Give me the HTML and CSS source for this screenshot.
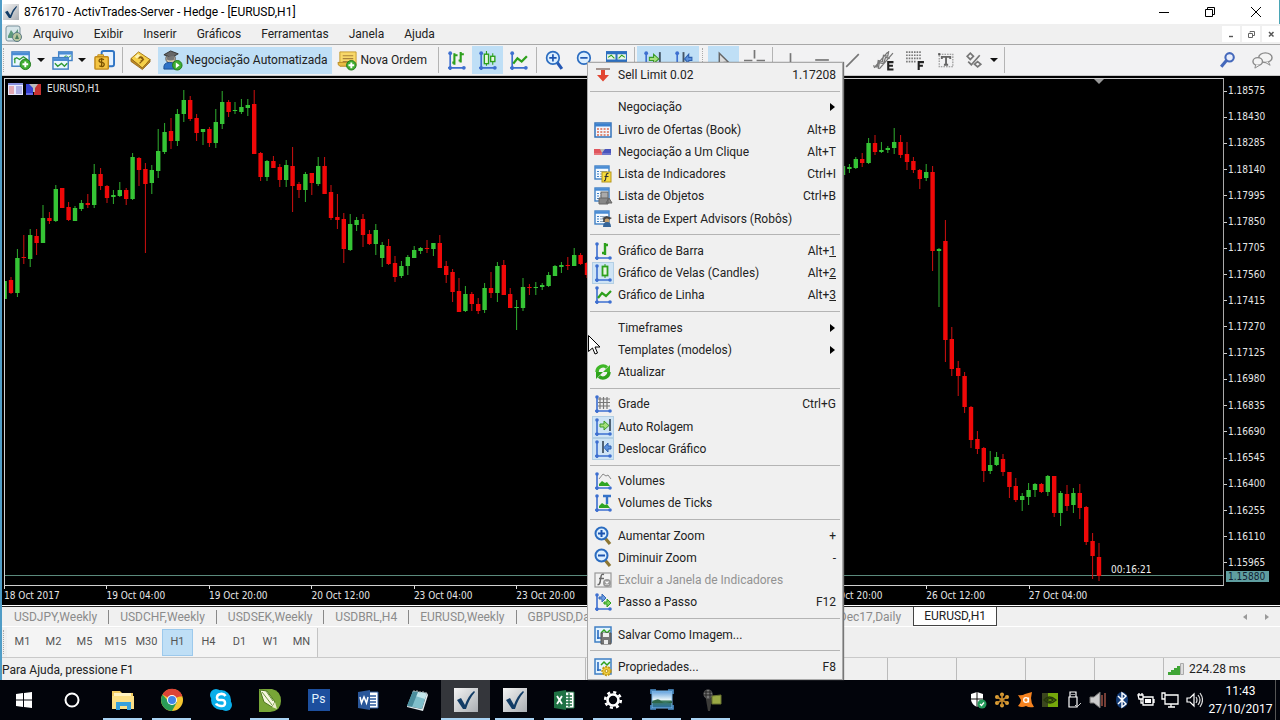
FILE: index.html
```html
<!DOCTYPE html>
<html lang="pt-BR">
<head>
<meta charset="utf-8">
<title>876170 - ActivTrades-Server - Hedge - [EURUSD,H1]</title>
<link rel="stylesheet" href="styles.css">
</head>
<body>
<svg class="defs" aria-hidden="true">
  <defs>
    <linearGradient id="silver" x1="0" y1="0" x2="1" y2="1"><stop offset="0" stop-color="#f4f4f4"/><stop offset="1" stop-color="#a9adb2"/></linearGradient>
    <linearGradient id="sky" x1="0" y1="0" x2="0" y2="1"><stop offset="0" stop-color="#5f9fdc"/><stop offset=".5" stop-color="#e4f1f7"/><stop offset=".6" stop-color="#3c7c5c"/><stop offset="1" stop-color="#2c6ea8"/></linearGradient>
    <symbol id="check" viewBox="0 0 24 24"><rect width="24" height="24" fill="url(#silver)"/><path d="M3 12l4-2 4 7q3-9 9-14l1 1q-6 7-9 17h-3z" fill="#123c66"/></symbol>
    <symbol id="axes" viewBox="0 0 20 20"><path d="M4 2v15h14M2 17h2v2" fill="none" stroke="#3d6fd0" stroke-width="1.6"/><circle cx="4" cy="3" r="1.8" fill="#3d6fd0"/><circle cx="4" cy="17" r="1.8" fill="#3d6fd0"/><circle cx="17" cy="17" r="1.8" fill="#3d6fd0"/></symbol>
    <symbol id="bars" viewBox="0 0 20 20"><use href="#axes"/><path d="M8 3v11M6 12h2M8 5h3M14 2v10M12 10h2M14 4h3" stroke="#2da01c" stroke-width="2"/></symbol>
    <symbol id="bar" viewBox="0 0 20 20"><use href="#axes"/><path d="M12 2v12M9 12h3M12 4h3" stroke="#2da01c" stroke-width="2.4"/></symbol>
    <symbol id="candles" viewBox="0 0 20 20"><use href="#axes"/><path d="M9 1v14M15 3v11" stroke="#2da01c"/><rect x="7" y="4" width="4" height="9" fill="#e8f8e0" stroke="#2da01c" stroke-width="1.3"/><rect x="13" y="6" width="4" height="5" fill="#e8f8e0" stroke="#2da01c" stroke-width="1.3"/></symbol>
    <symbol id="candle" viewBox="0 0 20 20"><use href="#axes"/><path d="M12 1v14" stroke="#2da01c"/><rect x="9.500" y="3.500" width="5" height="9" fill="#e8f8e0" stroke="#2da01c" stroke-width="1.8"/></symbol>
    <symbol id="line" viewBox="0 0 20 20"><use href="#axes"/><path d="M5 13l4-5 4 3 5-5" fill="none" stroke="#2da01c" stroke-width="2.2"/></symbol>
    <symbol id="scroll" viewBox="0 0 20 20"><use href="#axes"/><path d="M17 2v12" stroke="#456" stroke-width="1.8"/><path d="M7 7h4V4l5 4.500-5 4.500v-3H7z" fill="#a5df7b" stroke="#3a9b28"/></symbol>
    <symbol id="shift" viewBox="0 0 20 20"><use href="#axes"/><path d="M10 2v12" stroke="#456" stroke-width="1.8"/><path d="M18 7h-3V4l-4 4.500 4 4.500v-3h3z" fill="#5c91dc" stroke="#2c5fae"/></symbol>
    <symbol id="zoomin" viewBox="0 0 20 20"><path d="M12 12l5 6" stroke="#8d7632" stroke-width="3.200"/><circle cx="8.500" cy="7.500" r="6" fill="#dcefff" stroke="#2b6cc0" stroke-width="2"/><path d="M8.500 4v7M5 7.500h7" stroke="#1c54b0" stroke-width="2"/></symbol>
    <symbol id="zoomout" viewBox="0 0 20 20"><path d="M12 12l5 6" stroke="#8d7632" stroke-width="3.200"/><circle cx="8.500" cy="7.500" r="6" fill="#dcefff" stroke="#2b6cc0" stroke-width="2"/><path d="M5 7.500h7" stroke="#1c54b0" stroke-width="2"/></symbol>
    <symbol id="list" viewBox="0 0 20 20"><rect x="2" y="2" width="14" height="13" fill="#f4faff" stroke="#3f7fc4" stroke-width="1.400"/><path d="M2 3.500h14" stroke="#4a8cd4" stroke-width="2.500"/><path d="M4 7.500h2M4 10h2M4 12.500h2" stroke="#3f7fc4"/><path d="M7 7.500h7M7 10h7M7 12.500h7" stroke="#8ea7bd"/></symbol>
    <symbol id="frame" viewBox="0 0 20 20"><rect x="2" y="2" width="16" height="15" fill="#e4f4ff" stroke="#3f7fc4" stroke-width="1.500"/><path d="M5 5v9M4 13h4" stroke="#2b6cc0" stroke-width="1.600"/><path d="M8 8l3-3 3 3 3-3" fill="none" stroke="#2da01c" stroke-width="1.500"/></symbol>
  </defs>
</svg>

<div class="screen">
  <main class="window">
    <header class="title">
      <svg class="title-icon" viewBox="0 0 24 24"><use href="#check"/></svg>
      <h1>876170 - ActivTrades-Server - Hedge - [EURUSD,H1]</h1>
      <div class="caption">
        <button aria-label="Minimizar"><svg viewBox="0 0 12 12"><path d="M1 6.500h10" stroke="#000"/></svg></button>
        <button aria-label="Restaurar"><svg viewBox="0 0 12 12"><path d="M1.500 3.500h7v7h-7zM3.500 3V1.500h7v7H9" fill="none" stroke="#000"/></svg></button>
        <button aria-label="Fechar"><svg viewBox="0 0 12 12"><path d="M1 1l10 10M11 1L1 11" stroke="#000"/></svg></button>
      </div>
    </header>

    <nav class="menubar">
      <svg class="app-icon" viewBox="0 0 18 18"><rect x="1" y="1" width="14" height="15" rx="2" fill="#d8e6ea" stroke="#7b929d"/><path d="M3 11l3-6 3 4 4-5v9H3z" fill="#5d9a7c"/><circle cx="12" cy="12" r="4.500" fill="#b9c7a0" stroke="#5c7a86"/><path d="M10 14l2-5 2 5z" fill="#4c7e5e"/></svg>
      <button>Arquivo</button><button>Exibir</button><button>Inserir</button><button>Gráficos</button><button>Ferramentas</button><button>Janela</button><button>Ajuda</button>
      <div class="mdi">
        <button aria-label="Minimizar gráfico"><svg viewBox="0 0 8 8"><path d="M2 6.500h4" stroke="#555" stroke-width="1.400"/></svg></button>
        <button aria-label="Restaurar gráfico"><svg viewBox="0 0 8 8"><path d="M1.500 3.500h4v4h-4zM3 2.500v-1h4.500v4H6" fill="none" stroke="#666"/></svg></button>
        <button aria-label="Fechar gráfico"><svg viewBox="0 0 8 8"><path d="M2 2l4.500 4.500M6.500 2L2 6.500" stroke="#555" stroke-width="1.500"/></svg></button>
      </div>
    </nav>

    <div class="toolbar">
      <span class="grip"></span>
      <button class="tool split" aria-label="Novo gráfico"><svg viewBox="0 0 22 22"><rect x="1" y="2" width="18" height="15" fill="#eaf7ff" stroke="#3f7fc4" stroke-width="1.500"/><path d="M1 4h18" stroke="#4a8cd4" stroke-width="3"/><path d="M4 8v6M3 10l3-2 3 2 4-3 4 3" fill="none" stroke="#2f9a36" stroke-width="1.300"/><circle cx="15" cy="15" r="5.500" fill="#3fae32" stroke="#227a1c"/><path d="M15 12v6M12 15h6" stroke="#fff" stroke-width="2"/></svg><i></i></button>
      <button class="tool split" aria-label="Perfis"><svg viewBox="0 0 22 22"><rect x="7" y="2" width="14" height="9" fill="#eaf7ff" stroke="#3f7fc4" stroke-width="1.500"/><path d="M7 3.500h14" stroke="#4a8cd4" stroke-width="2.500"/><path d="M12 8l3-2 2 2 3-2" fill="none" stroke="#2f9a36"/><rect x="1" y="8" width="16" height="12" fill="#eaf7ff" stroke="#3f7fc4" stroke-width="1.500"/><path d="M1 10h16" stroke="#4a8cd4" stroke-width="3"/><path d="M3 14l3 3 4-3 3 3 3-3" fill="none" stroke="#2f9a36" stroke-width="1.500"/></svg><i></i></button>
      <button class="tool" aria-label="Observação do mercado"><svg viewBox="0 0 22 22"><rect x="8" y="1" width="13" height="16" rx="2" fill="#e6f2ff" stroke="#2f74c4" stroke-width="2"/><path d="M4 5h6v3H4z" fill="#f2c84b" stroke="#c08a17"/><rect x="1" y="7" width="14" height="13" rx="1" fill="#f4c443" stroke="#c0891a" stroke-width="1.500"/><path d="M10.500 10q-4-1.500-5 .500t2.500 2.500 2.500 3-5 .500M8 8.500v9.500" fill="none" stroke="#7a5200" stroke-width="1.400"/></svg></button>
      <span class="sep"></span>
      <button class="tool" aria-label="Caixa de ferramentas"><svg viewBox="0 0 22 22"><path d="M1 9l8-7 12 8-8 9z" fill="#f5d04a" stroke="#a77a18"/><path d="M1 9v3l12 8.500 8-8V10l-8 9z" fill="#c08a25" stroke="#8c6415" stroke-width=".8"/><path d="M7 5l7 5-4 4M9 9q2-3 4-1t-2 4" fill="none" stroke="#8a5d10" stroke-width="1.400"/><path d="M5 7l3-3 3 2-4 3z" fill="#fff3b0"/></svg></button>
      <button class="labelled auto on"><svg viewBox="0 0 22 22"><circle cx="9" cy="9" r="5" fill="#d7c3a5" stroke="#555"/><path d="M2 5l7-4 8 3-7 4z" fill="#666" stroke="#333"/><path d="M5 7v3q4 2 8 0V6" fill="#777"/><path d="M2 20q-1-7 6-7t7 7z" fill="#2e73c8" stroke="#194f94"/><circle cx="16" cy="16" r="5" fill="#3fae32" stroke="#227a1c"/><path d="M14.500 13l4 3-4 3z" fill="#fff"/></svg>Negociação Automatizada</button>
      <button class="labelled"><svg viewBox="0 0 22 22"><path d="M3 2h17v14H3q-2-1 0-3z" fill="#f8d869" stroke="#c49a2e"/><path d="M1 13h12v4H3q-2-1-2-4z" fill="#e9bd45" stroke="#b88922"/><path d="M6 6h11M6 9h11M6 12h6" stroke="#a8813a" stroke-width="1.200"/><circle cx="15" cy="16" r="5" fill="#3fae32" stroke="#227a1c"/><path d="M15 13v6M12 16h6" stroke="#fff" stroke-width="2"/></svg>Nova Ordem</button>
      <span class="sep wide"></span>
      <button class="tool" aria-label="Barras"><svg viewBox="0 0 20 20"><use href="#bars"/></svg></button>
      <button class="tool on" aria-label="Velas"><svg viewBox="0 0 20 20"><use href="#candles"/></svg></button>
      <button class="tool" aria-label="Linha"><svg viewBox="0 0 20 20"><use href="#line"/></svg></button>
      <span class="sep"></span>
      <button class="tool" aria-label="Aumentar"><svg viewBox="0 0 20 20"><path d="M12 11l5 7" stroke="#2457b4" stroke-width="3"/><circle cx="8.500" cy="7.500" r="6" fill="#dcefff" stroke="#2b6cc0" stroke-width="1.600"/><path d="M8.500 4v7M5 7.500h7" stroke="#1c54b0" stroke-width="1.600"/></svg></button>
      <button class="tool" aria-label="Diminuir"><svg viewBox="0 0 20 20"><path d="M12 11l5 7" stroke="#2457b4" stroke-width="3"/><circle cx="8.500" cy="7.500" r="6" fill="#dcefff" stroke="#2b6cc0" stroke-width="1.600"/><path d="M5 7.500h7" stroke="#1c54b0" stroke-width="1.600"/></svg></button>
      <button class="tool" aria-label="Lado a lado"><svg viewBox="0 0 20 20"><path d="M0 1h20v17H0z" fill="#2c6fc0"/><path d="M1 4h8v5H1zM11 4h8v5h-8zM1 12h8v5H1zM11 12h8v5h-8z" fill="#eaf7e8"/><path d="M2 7l3-2 3 3M12 8l3-3 3 2" fill="none" stroke="#2da01c"/></svg></button>
      <span class="sep"></span>
      <button class="tool on" aria-label="Auto rolagem"><svg viewBox="0 0 20 20"><use href="#scroll"/></svg></button>
      <button class="tool on" aria-label="Deslocar"><svg viewBox="0 0 20 20"><use href="#shift"/></svg></button>
      <span class="grip mid"></span>
      <button class="tool on" aria-label="Cursor"><svg viewBox="0 0 20 20"><path d="M6 3v13l3-3 2 5 2-1-2-5h4z" fill="#ddd" stroke="#666" stroke-width="1.400"/></svg></button>
      <button class="tool" aria-label="Mira"><svg viewBox="0 0 20 20"><path d="M10 0v8M10 12v8M0 10h8M12 10h8" stroke="#777" stroke-width="1.600"/></svg></button>
      <span class="sep"></span>
      <button class="tool" aria-label="Linha vertical"><svg viewBox="0 0 20 20"><path d="M10 3v15" stroke="#777" stroke-width="1.600"/></svg></button>
      <button class="tool" aria-label="Linha horizontal"><svg viewBox="0 0 20 20"><path d="M4 9.500h13" stroke="#777" stroke-width="1.600"/></svg></button>
      <button class="tool" aria-label="Linha de tendência"><svg viewBox="0 0 20 20"><path d="M4 16L16 4" stroke="#777" stroke-width="1.600"/></svg></button>
      <button class="tool" aria-label="Canal"><svg viewBox="0 0 20 20"><path d="M1 17L14 2M6 18L19 3M0 15l4 1 1-6 4 1 1-6 4 1 1-5M5 18l1-6 4 1 2-6 4 1" fill="none" stroke="#777" stroke-width="1.200"/><path d="M19.500 11.500h-5v7h5M15 15h4" fill="none" stroke="#222" stroke-width="2"/></svg></button>
      <button class="tool" aria-label="Fibonacci"><svg viewBox="0 0 20 20"><path d="M2 2h15M2 5h15M2 8h15M2 11h10" stroke="#777" stroke-width="1.600" stroke-dasharray="1.500 1"/><path d="M19 11.500h-5V19M14 15h4" fill="none" stroke="#222" stroke-width="2"/></svg></button>
      <button class="tool" aria-label="Texto"><svg viewBox="0 0 20 20"><rect x="4" y="4" width="13" height="12" fill="none" stroke="#888" stroke-dasharray="1.500 1"/><path d="M3 3h2v2H3z" fill="#555"/><path d="M6.500 8.500v-2h8v2M10.500 6v8M8.500 14h4" fill="none" stroke="#666" stroke-width="1.800"/></svg></button>
      <button class="tool split" aria-label="Objetos"><svg viewBox="0 0 20 20"><path d="M3 6l3-3 3 3-3 3zM4 11l3 3 8-9" fill="none" stroke="#777" stroke-width="1.600"/><path d="M13 11l3 2.500-3 2.500-3-2.500z" fill="none" stroke="#777" stroke-width="1.600"/></svg><i></i></button>
      <span class="sep"></span>
      <div class="tools-end">
        <button class="tool" aria-label="Pesquisar"><svg viewBox="0 0 20 20"><circle cx="12" cy="7" r="4" fill="#e8eefc" stroke="#4569bb" stroke-width="2"/><path d="M9 10l-5 6" stroke="#4569bb" stroke-width="3"/></svg></button>
        <button class="tool" aria-label="Comunidade"><svg viewBox="0 0 22 20"><ellipse cx="14" cy="7" rx="7" ry="5" fill="#f4f4f4" stroke="#8a8a8a" stroke-width="1.500"/><path d="M17 11l2 4-5-3" fill="#eee" stroke="#8a8a8a"/><ellipse cx="6" cy="11" rx="5" ry="4" fill="#f4f4f4" stroke="#8a8a8a" stroke-width="1.500"/><path d="M4 14l-1 4 5-3" fill="#eee" stroke="#8a8a8a"/></svg></button>
      </div>
    </div>

    <section class="chart">
      <div class="plot">
        <svg class="candles" id="candles-plot" viewBox="5 79 1218 506" preserveAspectRatio="none" role="img" aria-label="EURUSD, H1"></svg>
        <div class="symbol">
          <svg viewBox="0 0 15 13"><rect width="15" height="12" fill="#e8eaff"/><path d="M0 1h15" stroke="#8891dd" stroke-width="2"/><path d="M1 4h5M1 6h5M1 8h5M1 10h5" stroke="#d66"/><path d="M8 4h6M8 6h6M8 8h6M8 10h6" stroke="#77c"/></svg>
          <svg viewBox="0 0 15 13"><path d="M0 1h7v11H0z" fill="#3540d0"/><path d="M8 1h7v11H8z" fill="#c63232"/><path d="M3 1h9l-3 4v4H7V5z" fill="#bbb"/><path d="M0 11h7" stroke="#99f"/></svg>
          <span>EURUSD,H1</span>
        </div>
      </div>
      <div class="prices">
        <ol>
          <li>1.18575</li><li>1.18430</li><li>1.18285</li><li>1.18140</li><li>1.17995</li><li>1.17850</li><li>1.17705</li><li>1.17560</li><li>1.17415</li><li>1.17270</li><li>1.17125</li><li>1.16980</li><li>1.16835</li><li>1.16690</li><li>1.16545</li><li>1.16400</li><li>1.16255</li><li>1.16110</li><li>1.15965</li>
        </ol>
        <span class="bid">1.15880</span>
      </div>
      <ol class="times">
        <li>18 Oct 2017</li><li>19 Oct 04:00</li><li>19 Oct 20:00</li><li>20 Oct 12:00</li><li>23 Oct 04:00</li><li>23 Oct 20:00</li><li></li><li></li><li>25 Oct 20:00</li><li>26 Oct 12:00</li><li>27 Oct 04:00</li>
      </ol>
    </section>

    <nav class="tabs">
      <button>USDJPY,Weekly</button><button>USDCHF,Weekly</button><button>USDSEK,Weekly</button><button>USDBRL,H4</button><button>EURUSD,Weekly</button><button>GBPUSD,Daily</button><button class="cut">Dec17,Daily</button><button class="active">EURUSD,H1</button>
      <span class="tab-arrows"><button aria-label="Anterior"><svg viewBox="0 0 6 8"><path d="M5 1v6L1 4z" fill="#999"/></svg></button><button aria-label="Próximo"><svg viewBox="0 0 6 8"><path d="M1 1v6l4-3z" fill="#999"/></svg></button></span>
    </nav>

    <div class="frames">
      <span class="grip"></span>
      <div class="frame-set"><button>M1</button><button>M2</button><button>M5</button><button>M15</button><button>M30</button><button class="on">H1</button><button>H4</button><button>D1</button><button>W1</button><button>MN</button></div>
    </div>

    <footer class="status">
      <span class="help">Para Ajuda, pressione F1</span><span class="c1"></span><span class="c2"></span><span class="c2"></span><span class="c2"></span><span class="c2"></span>
      <span class="ping"><svg viewBox="0 0 16 12"><path d="M0 9h3v3H0zM3 7h3v5H3zM6 5h3v7H6zM9 3h3v9H9z" fill="#3fa535"/><path d="M12.500.500h3v11h-3z" fill="#ddd" stroke="#aaa"/></svg>224.28 ms</span>
    </footer>
  </main>

  <footer class="taskbar">
    <button class="sys" aria-label="Iniciar"><svg viewBox="0 0 24 24"><path d="M4 6l7-1v6.500H4zM12 5l8-1v7.500h-8zM4 12.500h7V19l-7-1zM12 12.500h8V20l-8-1z" fill="#fff"/></svg></button>
    <button class="sys" aria-label="Cortana"><svg viewBox="0 0 24 24"><circle cx="12" cy="12" r="6.500" fill="none" stroke="#fff" stroke-width="2"/></svg></button>
    <div class="apps">
      <button class="open" aria-label="Explorador"><svg viewBox="0 0 24 24"><path d="M1 3h8l2 2h11v16H1z" fill="#f3cd62"/><path d="M3 5h17v3H3z" fill="#fff3c2"/><path d="M1 8h22v13H1z" fill="#fbdf86"/><path d="M5 22v-8h15v8h-4v-4H9v4z" fill="#35a0dc"/></svg></button>
      <button class="open" aria-label="Chrome"><svg viewBox="0 0 24 24"><circle cx="12" cy="12" r="11" fill="#f5c731"/><path d="M12 12L2.500 6.500A11 11 0 0 1 22 7z" fill="#dc4437"/><path d="M2.500 6.500A11 11 0 0 0 12 23l5-9H9z" fill="#2a9b57"/><path d="M12 7h10v1.500H12z" fill="#dc4437"/><circle cx="12" cy="12" r="5" fill="#fff"/><circle cx="12" cy="12" r="4" fill="#4285e8"/></svg></button>
      <button aria-label="Skype"><svg viewBox="0 0 24 24"><circle cx="12" cy="12" r="10" fill="#09aeea"/><circle cx="7" cy="7" r="6" fill="#09aeea"/><circle cx="17" cy="17" r="6" fill="#09aeea"/><path d="M16.500 8Q15 5.500 11.500 6T8 9.500t4 2.500 4 3-4 3-5-2.500" fill="none" stroke="#fff" stroke-width="2.600"/></svg></button>
      <button class="open" aria-label="Corel"><svg viewBox="0 0 24 24"><path d="M1 1h13q9 2 9 12T12 24H1z" fill="#78a637"/><path d="M2 2l7 1 8 11-3 5-8-5z" fill="#f5f5df" stroke="#4f7721"/><path d="M4 4l10 13M8 3l7 10" stroke="#6a963d"/><path d="M14 19l3-5 2 7z" fill="#e8ecc8"/></svg></button>
      <button aria-label="Photoshop"><span class="ps">Ps</span></button>
      <button aria-label="Word"><svg viewBox="0 0 24 24"><path d="M11 4h11v16H11z" fill="#fff" stroke="#2a579a"/><path d="M13 8h7M13 11h7M13 14h7M13 17h7" stroke="#2a579a" stroke-width="1.500"/><path d="M2 4l12-2v20L2 20z" fill="#2a579a"/><path d="M4 9l1.500 6L8 9l2.500 6L12 9" fill="none" stroke="#fff" stroke-width="1.500"/></svg></button>
      <button aria-label="Bloco de notas"><svg viewBox="0 0 24 24"><path d="M8 3l14 2-5 16-15-3z" fill="#80bfcb"/><path d="M8 3l14 2-2 6L7 7z" fill="#c3e6eb"/><path d="M8 3L2 18l5 1L13 4z" fill="#4b8d9d"/><path d="M2 18l15 3 5-16 1 2-5 16-16-4z" fill="#e3edf0"/><path d="M9 2v2M12 2v2M15 3v2M18 3v2M21 4v2" stroke="#aaa"/></svg></button>
      <button class="open current" aria-label="ActivTrades"><svg viewBox="0 0 24 24"><use href="#check"/></svg></button>
      <button class="open" aria-label="ActivTrades 2"><svg viewBox="0 0 24 24"><use href="#check"/></svg></button>
      <button class="open" aria-label="Excel"><svg viewBox="0 0 24 24"><path d="M11 4h11v16H11z" fill="#fff" stroke="#1f7244"/><path d="M13 8h7M13 11h7M13 14h7M13 17h7M17 5v14" stroke="#1f7244" stroke-width="1.300"/><path d="M2 4l12-2v20L2 20z" fill="#1f7244"/><path d="M5 8l5 8M10 8l-5 8" stroke="#fff" stroke-width="1.800"/></svg></button>
      <button class="open" aria-label="Configurações"><svg viewBox="0 0 24 24"><circle cx="12" cy="12" r="5.500" fill="none" stroke="#fff" stroke-width="2.600"/><circle cx="12" cy="12" r="7.800" fill="none" stroke="#fff" stroke-width="2.600" stroke-dasharray="3.060 3.060"/></svg></button>
      <button class="open" aria-label="Imagem"><svg viewBox="0 0 24 24"><rect x="2" y="3" width="20" height="17" fill="url(#sky)" stroke="#7cb8e8"/><path d="M2 14q6-5 9-1t11 0v2H2z" fill="#2e674a"/><path d="M1 6V2h5M18 2h5v4M23 17v4h-5M6 21H1v-4" fill="none" stroke="#4f94cf" stroke-width="1.600"/></svg></button>
      <button class="open" aria-label="Gravador"><svg viewBox="0 0 24 24"><path d="M6 6h8l-3 17H9z" fill="#3b3b39"/><circle cx="9" cy="6" r="4.500" fill="#777"/><path d="M5 4h8M4 7h10M7 2v8M11 2v8" stroke="#222"/><path d="M13 8l9-1v9h-9z" fill="#9aa945" stroke="#697331"/></svg></button>
    </div>
    <div class="tray">
      <button aria-label="Defender"><svg viewBox="0 0 18 18"><path d="M2 3l6-2 6 2v6q-1 5-6 7-5-2-6-7z" fill="#fff"/><path d="M8 1v15M2 8h12" stroke="#111"/><circle cx="13" cy="13" r="4.500" fill="#23995a"/><path d="M11 13l1.500 1.500L15 11.500" fill="none" stroke="#fff" stroke-width="1.300"/></svg></button>
      <button aria-label="Atalho"><svg viewBox="0 0 18 18"><g fill="#e0a238"><circle cx="9" cy="3.500" r="2"/><circle cx="9" cy="14.500" r="2"/><circle cx="4" cy="6" r="2"/><circle cx="14" cy="6" r="2"/><circle cx="4" cy="12" r="2"/><circle cx="14" cy="12" r="2"/></g><path d="M9 3v12M4 6l10 6M14 6L4 12" stroke="#c98c2c" stroke-width="1.600"/></svg></button>
      <button aria-label="Avast"><svg viewBox="0 0 18 18"><path d="M1 4q4 1 7-1l7-2-1 6q0 5 3 9-5 1-8-1-4 2-8 0 3-3 3-6z" fill="#f5821f"/><circle cx="9" cy="9" r="2.300" fill="none" stroke="#fff" stroke-width="1.300"/><path d="M11.500 6.500v5" stroke="#fff" stroke-width="1.300"/></svg></button>
      <button aria-label="NVIDIA"><svg viewBox="0 0 18 18"><rect x="1" y="2" width="16" height="14" fill="#3b471e"/><path d="M7 2h10v14H7z" fill="#75a80b"/><path d="M3 9q5-6 12 0-6 6-12 0zM6 9q3-3 6 0-3 3-6 0z" fill="none" stroke="#26380a" stroke-width="1.400"/></svg></button>
      <button aria-label="USB"><svg viewBox="0 0 18 18"><path d="M5 6V1h6v5M4 6h8v10H4zM7 3v1M9 3v1" fill="none" stroke="#fff" stroke-width="1.200"/><path d="M10 14l2 2 4-4" stroke="#ccc" fill="none"/></svg></button>
      <button aria-label="Som Realtek"><svg viewBox="0 0 18 18"><path d="M1 6h4l6-5v16l-6-5H1z" fill="#ccc" stroke="#777"/><path d="M13 4v11M16 2v14" stroke="#9d5145" stroke-width="1.500"/></svg></button>
      <button aria-label="Bluetooth"><svg viewBox="0 0 18 18"><ellipse cx="9" cy="9" rx="6" ry="8" fill="#143d78"/><path d="M5 5l8 8-4 3V2l4 3-8 8" fill="none" stroke="#fff" stroke-width="1.400"/></svg></button>
      <button aria-label="Bateria"><svg viewBox="0 0 18 18"><path d="M6 6h10v8H6zM17 8v4M1 4h5v4H2zM2 2v2M5 2v2M4 8v4h2" fill="none" stroke="#fff" stroke-width="1.300"/><path d="M8 8h6v4H8z" fill="#fff"/></svg></button>
      <button aria-label="Rede"><svg viewBox="0 0 18 18"><path d="M4 4h13v9H4zM10 13v3M7 16h7M1 2v6h3V2z" fill="none" stroke="#fff" stroke-width="1.300"/></svg></button>
      <button aria-label="Volume"><svg viewBox="0 0 18 18"><path d="M2 7h3l4-4v12l-4-4H2z" fill="none" stroke="#fff" stroke-width="1.200"/><path d="M11 6q2 3 0 6M13 4q4 5 0 10M15 2q5 7 0 14" fill="none" stroke="#ddd" stroke-width="1.200"/></svg></button>
    </div>
    <div class="clock"><span>11:43</span><span>27/10/2017</span></div>
  </footer>

  <div class="context" role="menu">
    <button role="menuitem"><svg viewBox="0 0 20 20"><path d="M3 4h14" stroke="#8b7771" stroke-width="1.500"/><path d="M8 5h4v5h4l-6 6.500L4 10h4z" fill="#e24632"/></svg><span>Sell Limit 0.02</span><kbd>1.17208</kbd></button>
    <hr>
    <button role="menuitem"><svg viewBox="0 0 20 20"></svg><span>Negociação</span><b></b></button>
    <button role="menuitem"><svg viewBox="0 0 20 20"><rect x="2" y="3" width="16" height="14" fill="#f3f6fd" stroke="#3472b8" stroke-width="1.500"/><path d="M2 5h16" stroke="#3a80ce" stroke-width="3"/><path d="M4 9h12M4 12h12M4 15h12" stroke="#d9694f" stroke-width="1.600" stroke-dasharray="2 1.300"/></svg><span>Livro de Ofertas (Book)</span><kbd>Alt+B</kbd></button>
    <button role="menuitem"><svg viewBox="0 0 20 20"><path d="M1 7h8v6H1z" fill="#e0555c"/><path d="M9 7h9v6H9z" fill="#4853bd"/><path d="M7 7h5l-3 4z" fill="#bbb"/><path d="M1 12h17" stroke="#fff" opacity=".4"/></svg><span>Negociação a Um Clique</span><kbd>Alt+T</kbd></button>
    <button role="menuitem"><svg viewBox="0 0 20 20"><use href="#list"/><rect x="9" y="8" width="9" height="10" fill="#f7dc3e" stroke="#b6961c"/><path d="M15.500 9.500q-2-.500-2.300 2l-.700 4q-.300 1.500-1.500 1M11.500 12.500h4" fill="none" stroke="#333" stroke-width="1.200"/></svg><span>Lista de Indicadores</span><kbd>Ctrl+I</kbd></button>
    <button role="menuitem"><svg viewBox="0 0 20 20"><use href="#list"/><rect x="8" y="6" width="7" height="7" fill="#aaa" stroke="#666"/><path d="M6 12h9v6H6zM13 17l3-5 3 5z" fill="#888" stroke="#666"/></svg><span>Lista de Objetos</span><kbd>Ctrl+B</kbd></button>
    <button role="menuitem"><svg viewBox="0 0 20 20"><use href="#list"/><path d="M9 9l5-2 5 2-5 3z" fill="#444"/><circle cx="14" cy="12" r="2.500" fill="#c7a06b"/><path d="M10 18q0-5 4-5t4 5z" fill="#356599"/><path d="M11 10v3" stroke="#333" stroke-width="1.500"/></svg><span>Lista de Expert Advisors (Robôs)</span></button>
    <hr>
    <button role="menuitem"><svg viewBox="0 0 20 20"><use href="#bar"/></svg><span>Gráfico de Barra</span><kbd>Alt+<u>1</u></kbd></button>
    <button role="menuitem" class="checked"><svg viewBox="0 0 20 20"><use href="#candle"/></svg><span>Gráfico de Velas (Candles)</span><kbd>Alt+<u>2</u></kbd></button>
    <button role="menuitem"><svg viewBox="0 0 20 20"><use href="#line"/></svg><span>Gráfico de Linha</span><kbd>Alt+<u>3</u></kbd></button>
    <hr>
    <button role="menuitem"><svg viewBox="0 0 20 20"></svg><span>Timeframes</span><b></b></button>
    <button role="menuitem"><svg viewBox="0 0 20 20"></svg><span>Templates (modelos)</span><b></b></button>
    <button role="menuitem"><svg viewBox="0 0 20 20"><path d="M4 10a6 6 0 0 1 10-4.500" fill="none" stroke="#3fb727" stroke-width="3.400"/><path d="M17 3v7h-7z" fill="#3fb727"/><path d="M16 10a6 6 0 0 1-10 4.500" fill="none" stroke="#2ea31c" stroke-width="3.400"/><path d="M3 17v-7h7z" fill="#2ea31c"/></svg><span>Atualizar</span></button>
    <hr>
    <button role="menuitem"><svg viewBox="0 0 20 20"><use href="#axes"/><path d="M7 3v12M10.500 3v12M14 3v12M5 5h12M5 8.500h12M5 12h12" stroke="#777" stroke-width="1.200"/></svg><span>Grade</span><kbd>Ctrl+G</kbd></button>
    <button role="menuitem" class="checked"><svg viewBox="0 0 20 20"><use href="#scroll"/></svg><span>Auto Rolagem</span></button>
    <button role="menuitem" class="checked"><svg viewBox="0 0 20 20"><use href="#shift"/></svg><span>Deslocar Gráfico</span></button>
    <hr>
    <button role="menuitem"><svg viewBox="0 0 20 20"><use href="#axes"/><path d="M6 8l4-5 3 2 2-1 3 4" fill="none" stroke="#888"/><path d="M6 15v-2l3-3 3 2 2-1 3 4z" fill="#2fa522"/></svg><span>Volumes</span></button>
    <button role="menuitem"><svg viewBox="0 0 20 20"><use href="#axes"/><path d="M10 3h8M14 3v8" stroke="#3472c8" stroke-width="2.400"/><path d="M6 15v-2l3-3 3 2 2-1 3 4z" fill="#2fa522"/></svg><span>Volumes de Ticks</span></button>
    <hr>
    <button role="menuitem"><svg viewBox="0 0 20 20"><use href="#zoomin"/></svg><span>Aumentar Zoom</span><kbd>+</kbd></button>
    <button role="menuitem"><svg viewBox="0 0 20 20"><use href="#zoomout"/></svg><span>Diminuir Zoom</span><kbd>-</kbd></button>
    <button role="menuitem" disabled><svg viewBox="0 0 20 20"><rect x="2" y="3" width="16" height="14" fill="#f2f2f2" stroke="#999" stroke-width="1.200"/><path d="M11 4.500q-2.500-1-3 2l-1 6q-.500 2.500-2.500 2M6 8.500h5" fill="none" stroke="#666" stroke-width="1.500"/><circle cx="14" cy="13" r="4" fill="#999"/><path d="M12.500 11.500l3 3M15.500 11.500l-3 3" stroke="#fff" stroke-width="1.200"/></svg><span>Excluir a Janela de Indicadores</span></button>
    <button role="menuitem"><svg viewBox="0 0 20 20"><use href="#axes"/><path d="M6 5h3V2l4 4-4 4V7H6z" fill="#6a9be0" stroke="#3568b8"/><path d="M11 10h3V7l4 4-4 4v-3h-3z" fill="#7bd05f" stroke="#2da01c"/></svg><span>Passo a Passo</span><kbd>F12</kbd></button>
    <hr>
    <button role="menuitem"><svg viewBox="0 0 20 20"><use href="#frame"/><path d="M8 8h10v11H8z" fill="#777" stroke="#555"/><path d="M10 8h6v4h-6zM11 15h4v4h-4z" fill="#eee"/></svg><span>Salvar Como Imagem...</span></button>
    <hr>
    <button role="menuitem"><svg viewBox="0 0 20 20"><use href="#frame"/><circle cx="13.500" cy="14" r="4.200" fill="#f3d13c" stroke="#c39a1a" stroke-width="2" stroke-dasharray="2 1"/><circle cx="13.500" cy="14" r="1.500" fill="#fff6c0" stroke="#b68d1a"/></svg><span>Propriedades...</span><kbd>F8</kbd></button>
  </div>

  <svg class="pointer" viewBox="0 0 12 20"><path d="M.500.500v16l4-3.500 2.500 6 2.500-1-2.500-6h5z" fill="#fff" stroke="#000"/></svg>
</div>
<script src="chart.js"></script>
</body>
</html>
```
FILE: styles.css
```css
* { box-sizing: border-box; }
body { margin: 0; font: 12px/16px Roboto, "Open Sans", sans-serif; color: #222; background: #000; }
button { margin: 0; padding: 0; border: 0; background: none; font: inherit; color: inherit; }
h1, ol { margin: 0; padding: 0; list-style: none; }
svg { display: block; flex: none; }
.defs { position: absolute; width: 0; height: 0; }

.screen { position: relative; display: flex; flex-direction: column; height: 100vh; min-height: 640px; overflow: hidden; }
.window { flex: 1; min-height: 0; display: flex; flex-direction: column; background: #f0f0f0; border-left: 2px solid #4f9cc6; }

.title { display: flex; align-items: center; height: 24px; background: #fff; border-right: 1px solid #4aa5b5; color: #000; }
.title-icon { width: 16px; height: 16px; margin: 0 5px 0 1px; }
.title h1 { font-size: 12px; font-weight: 400; }
.caption { display: flex; margin-left: auto; }
.caption button { width: 46px; height: 24px; display: grid; place-items: center; }
.caption svg { width: 12px; height: 12px; }

.menubar { display: flex; align-items: center; height: 21px; border-bottom: 1px solid #a8a8a8; }
.app-icon { width: 18px; height: 18px; margin-left: 3px; }
.menubar > button { padding: 0 10px; }
.mdi { display: flex; gap: 2px; margin-left: auto; }
.mdi button { width: 18px; height: 16px; background: #fff; display: grid; place-items: center; }
.mdi svg { width: 8px; height: 8px; }

.toolbar { display: flex; align-items: center; height: 31px; padding-left: 1px; background: #f2f2f3; border-bottom: 1px solid #c8c8c8; }
.grip { width: 4px; height: 24px; border-left: 1px dotted #aaa; }
.grip.mid { width: 6px; margin-left: 3px; }
.tool { width: 31px; height: 28px; display: flex; align-items: center; justify-content: center; }
.tool svg { width: 21px; height: 21px; }
.on { background: #bfdff6; }
.split { width: 41px; gap: 5px; }
.split i { border: 4px solid transparent; border-top-color: #111; border-bottom: 0; }
.sep { width: 1px; height: 26px; margin: 0 2px; background: #b4b4b4; }
.labelled { display: flex; align-items: center; gap: 3px; height: 27px; padding: 0 4px; white-space: nowrap; }
.labelled svg { width: 21px; height: 21px; }
.auto { margin: 0 1px 0 2px; }
.sep.wide { margin-left: 7px; }
.tools-end { display: flex; gap: 4px; margin-left: auto; padding-right: 2px; }

.chart { flex: 1; min-height: 0; display: grid; grid-template-columns: minmax(0, 1fr) 56px; grid-template-rows: minmax(0, 1fr) 19px; padding: 2px 0 0 2px; background: #000; border-bottom: 1px solid #fff; color: #e6e6e6; font: 10px/14px "DejaVu Sans Condensed", "DejaVu Sans", sans-serif; }
.plot { position: relative; min-height: 0; border: 1px solid #d0d0d0; border-right-color: #aaa; }
.candles { width: 100%; height: 100%; }
.symbol { position: absolute; top: 3px; left: 3px; display: flex; align-items: center; gap: 3px; }
.symbol svg { width: 15px; height: 13px; }
.symbol span { padding-left: 3px; }
.prices { display: flex; flex-direction: column; min-height: 0; padding: 6px 0 4px; }
.prices ol { flex: 1; display: flex; flex-direction: column; justify-content: space-between; margin-bottom: 1px; }
.prices li { display: flex; align-items: center; gap: 1px; }
.prices li::before { content: ""; width: 3px; height: 1px; background: #ccc; }
.bid { width: 43px; height: 11px; margin-left: 2px; padding-left: 2px; line-height: 11px; background: #5f9ea0; color: #123; }
.times { grid-column: 1 / -1; display: flex; width: calc(100% - 56px); }
.times li { flex: 0 0 8.4%; white-space: nowrap; }
.times li::before { content: ""; display: block; width: 1px; height: 3px; background: #ddd; }

.tabs { display: flex; height: 21px; padding-left: 1px; border-top: 1px solid #222; border-bottom: 1px solid #fff; color: #8b8b8b; }
.tabs > button { position: relative; padding: 0 12px 0 11px; white-space: nowrap; }
.tabs > button:not(.active):not(.cut)::after { content: ""; position: absolute; right: 0; top: 3px; height: 14px; border-right: 1px solid #888; }
.tabs > .cut { flex: 1; text-align: right; }
.tabs > .active { background: #fff; border: 1px solid #444; border-top: 0; color: #222; padding: 0 10px; }
.tab-arrows { display: flex; justify-content: flex-end; align-items: center; gap: 14px; width: 283px; padding-right: 8px; }
.tab-arrows button { width: 8px; }
.tab-arrows svg { width: 6px; height: 8px; }

.frames { display: flex; align-items: center; height: 31px; padding-left: 1px; border-bottom: 1px solid #c9c9c9; background: #efefef; color: #555; font-size: 11px; }
.frame-set { display: flex; height: 29px; align-items: center; border-right: 1px solid #c4c4c4; background: #f4f4f4; }
.frame-set button { width: 31px; height: 27px; }
.frame-set .on { border: 1px solid #9cc9ec; }

.status { display: flex; height: 22px; align-items: stretch; }
.status span { border-left: 1px solid #bbb; line-height: 24px; }
.status .help { flex: 1; border: 0; }
.status .c1 { width: 302px; }
.status .c2 { width: 69px; }
.status .ping { display: flex; align-items: center; gap: 5px; width: 117px; padding-left: 4px; }
.ping svg { width: 16px; height: 12px; }

.taskbar { display: flex; height: 40px; background: #02040b; color: #fff; }
.taskbar button { display: grid; place-items: center; height: 40px; }
.sys { width: 48px; }
.sys svg { width: 24px; height: 24px; }
.apps { display: flex; margin-left: 2px; }
.apps button { position: relative; width: 49px; }
.apps svg { width: 24px; height: 24px; }
.apps .open::after { content: ""; position: absolute; left: 5px; right: 5px; bottom: 0; height: 2px; background: #a9d3f3; }
.apps .current { background: #34363b; }
.apps .current::after { left: 0; right: 0; }
.ps { width: 22px; height: 22px; background: #1d4f9e; color: #e3f2ff; text-align: center; line-height: 21px; }
.tray { display: flex; margin-left: auto; }
.tray button { width: 24px; }
.tray svg { width: 18px; height: 18px; }
.clock { width: 70px; margin-right: 4px; border-right: 1px solid #555; display: flex; flex-direction: column; justify-content: center; text-align: center; line-height: 18px; }

.context { position: absolute; left: 587px; top: 62px; bottom: 40px; width: 256px; display: flex; flex-direction: column; padding: 1px 0; background: #f0f0f0; border: 1px solid #aaa; box-shadow: 1px 0 1px #777; }
.context button { flex: 1 1 22px; min-height: 0; display: flex; align-items: center; gap: 4px; padding: 0 6px 0 4px; text-align: left; white-space: nowrap; }
.context svg { width: 22px; height: 22px; border: 1px solid transparent; }
.context .checked svg { background: #cfe4f5; border-color: #b3cfe4; }
.context span { flex: 1; }
.context kbd { font: inherit; }
.context b { margin-right: 1px; border: 4px solid transparent; border-left: 5px solid #000; border-right: 0; }
.context hr { flex: 0 0 10px; margin: 0 2px; border: 0; background: linear-gradient(#b4b4b4, #b4b4b4) center / 100% 1px no-repeat; }
.context button:disabled { color: #929292; }

.pointer { position: absolute; left: 588px; top: 335px; width: 12px; height: 20px; }
```
FILE: chart.js
```js
// Each run: index of the first bar, vertical origin, then rows of
// [colour, high, body top, body bottom, low] in thirds of a unit.
const runs = [
  { first: 0, top: 80, bars: [
    ['g',603,603,657,657],['r',590,600,640,641],['g',506,534,640,650],['r',465,531,535,553],['g',448,465,537,560],
    ['r',447,468,489,525],['g',375,414,489,489],['r',397,414,422,433],['g',316,327,423,426],['r',325,325,384,384],
    ['r',367,381,420,423],['g',377,384,423,423],['g',360,369,386,393],['r',343,369,375,384],['g',252,283,375,383],
    ['r',264,282,319,331],['r',315,318,353,368],['g',331,345,351,372],['g',306,330,348,350],['r',324,329,357,374],
    ['g',220,231,357,360],['r',230,235,270,317],['r',249,266,312,518],['g',255,270,309,343],['g',148,213,273,293],
    ['g',129,156,216,223],['r',115,154,183,207],['g',88,101,183,199],['g',30,60,102,125],['r',48,60,118,123],
    ['r',102,114,158,182],['g',147,147,156,196],['r',140,147,189,200],['g',88,127,189,204],['g',34,66,132,146],
    ['r',60,66,96,112],['g',67,90,93,102],['g',57,81,95,102],['g',58,75,84,109],['r',30,73,222,222],
    ['r',217,219,291,304],['g',240,243,291,302],['r',228,242,264,264],['r',252,262,300,322],['g',240,255,300,320],
    ['r',200,258,318,395]] },
  { first: 46, top: 130, bars: [
    ['r',155,162,180,203],['g',125,131,180,217],['r',128,130,160,195],['g',82,108,162,168],['r',80,108,191,192],
    ['r',164,186,264,269],['r',193,261,270,298],['r',248,266,358,398],['g',252,282,360,362],['g',262,270,284,303],
    ['r',252,267,315,352],['r',300,312,342,346],['g',282,300,342,375],['g',337,346,384,411],['r',327,347,402,405],
    ['r',378,399,441,456],['g',393,407,438,443],['g',375,381,408,434],['g',348,360,384,384],['g',352,354,362,372],
    ['r',331,353,357,368],['g',339,339,358,377],['r',315,339,414,415],['r',392,408,434,458],['r',418,426,486,517],
    ['r',444,483,546,546],['g',468,492,544,546],['r',487,492,522,543],['r',504,521,543,553],['g',459,474,540,550],
    ['r',426,474,490,505],['g',396,407,489,516],['r',390,404,495,496],['r',475,492,534,535],['g',509,531,534,600],
    ['g',443,471,534,543],['r',462,470,474,494],['g',455,470,475,494],['g',458,464,471,480],['g',426,435,468,470],
    ['g',404,408,438,439],['g',395,405,410,429],['r',380,405,408,419],['g',354,375,407,407],['r',370,374,402,404],
    ['r',395,399,436,445]] },
  { first: 131, top: 120, bars: [
    ['g',130,139,165,165],['g',132,141,146,158],['g',112,117,144,146],['r',99,117,129,140],['g',54,69,129,132],
    ['r',46,69,96,104],['g',65,90,96,98],['g',79,84,90,98],['g',24,66,84,102],['r',46,66,105,115],
    ['r',66,102,125,150],['r',110,123,150,158],['r',147,150,178,206],['g',132,156,175,182],['r',138,156,393,453],
    ['g',385,387,393,560],['r',300,363,661,726],['r',621,657,746,767],['r',723,743,768,827],['r',756,768,861,879],
    ['r',857,861,960,983],['r',934,957,988,1002],['r',982,985,1053,1086],['g',993,1034,1053,1061],['g',996,1011,1035,1037],
    ['r',1002,1017,1057,1067],['r',1056,1056,1101,1134],['r',1073,1098,1140,1147],['g',1120,1128,1140,1172],['g',1089,1109,1131,1154],
    ['g',1089,1092,1110,1131],['r',1088,1092,1116,1118],['g',1065,1068,1116,1127],['r',1068,1068,1179,1190],['g',1113,1119,1179,1218],
    ['r',1095,1121,1158,1172],['g',1105,1119,1156,1180],['r',1093,1119,1164,1197],['r',1158,1161,1266,1276],['r',1238,1262,1308,1377],
    ['r',1270,1310,1368,1383]] },
];

const plot = document.getElementById('candles-plot');
const fills = { g: '#35c435', r: '#f00808' };
const wicks = { g: '#2fae2f', r: '#d01010' };

function add(name, attrs) {
  const el = document.createElementNS('http://www.w3.org/2000/svg', name);
  for (const key in attrs) el.setAttribute(key, attrs[key]);
  plot.appendChild(el);
  return el;
}

add('rect', { x: 5, y: 575, width: 1218, height: 1, fill: '#5b8a7c' });
add('path', { d: 'M1094 79h10l-5 5z', fill: '#999' });
for (const run of runs) {
  run.bars.forEach(([c, high, top, bottom, low], n) => {
    const x = 4.6 + 6.4 * (run.first + n);
    const y = v => Math.round(run.top + v / 3);
    add('rect', { x: x - 0.5, y: y(high), width: 1, height: y(low) - y(high), fill: wicks[c] });
    add('rect', { x: x - 2.2, y: y(top), width: 4.4, height: Math.max(1, y(bottom) - y(top)), fill: fills[c] });
  });
}
const timer = add('text', { x: 1111, y: 573, fill: '#eee' });
timer.textContent = '00:16:21';
```
